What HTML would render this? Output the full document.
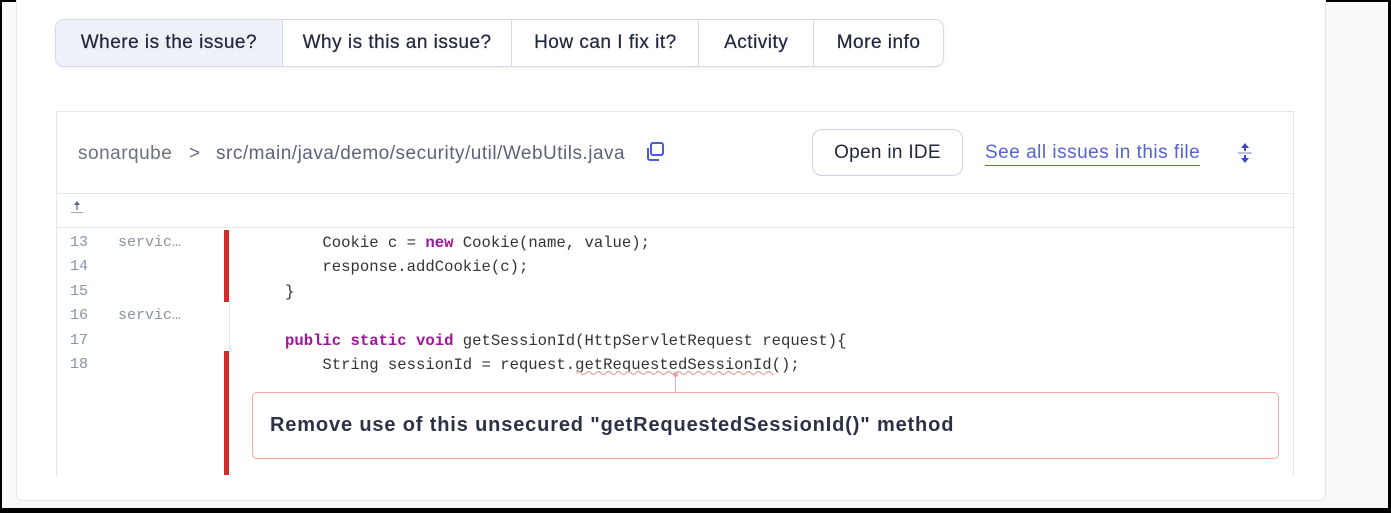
<!DOCTYPE html>
<html><head><meta charset="utf-8"><style>
*{margin:0;padding:0;box-sizing:border-box}
body{width:1391px;height:513px;background:#000;position:relative;overflow:hidden;font-family:"Liberation Sans",sans-serif}
.a{position:absolute}
#page{left:2px;top:2px;width:1386px;height:506px;background:#f9f9fb}
#panel{left:16px;top:0;width:1310px;height:501px;background:#fff;border-left:1px solid #e6e8ef;border-right:1px solid #e3e7f1;border-bottom:1px solid #e6e8ef;border-radius:0 0 6px 6px}
.tabs{left:55px;top:19px;width:889px;height:48px;border:1px solid #d3d9e6;border-radius:9px;overflow:hidden;display:flex;box-shadow:0 1px 3px rgba(0,0,0,.06)}
.tab{height:100%;display:flex;align-items:center;justify-content:center;font-size:19px;letter-spacing:.5px;color:#232840;border-right:1px solid #d3d9e6;-webkit-text-stroke:.25px #232840}
.tab:last-child{border-right:none}
.t{font-size:19px;letter-spacing:.5px}
.mono{font-family:"Liberation Mono",monospace;font-size:15.6px;color:#333;white-space:pre}
.ln{color:#8a93a3;font-size:15px}
.kw{color:#a0139b;font-weight:bold}
</style></head><body>
<div id="page" class="a"></div>
<div id="panel" class="a"></div>
<div class="a tabs">
<div class="tab" style="width:227px;background:#eef1f7">Where is the issue?</div>
<div class="tab" style="width:230px">Why is this an issue?</div>
<div class="tab" style="width:187px">How can I fix it?</div>
<div class="tab" style="width:115px">Activity</div>
<div class="tab" style="width:129px">More info</div>
</div>
<div class="a" style="left:56px;top:111px;width:1238px;height:365px;border:1px solid #e4e5e9;border-bottom:none"></div>
<div class="a" style="left:56px;top:193px;width:1238px;height:1px;background:#e4e5e9"></div>
<div class="a" style="left:56px;top:227px;width:1238px;height:1px;background:#e4e5e9"></div>
<div class="a t" style="left:78px;top:143px;color:#6b7180">sonarqube</div>
<div class="a t" style="left:189px;top:143px;color:#6b7180">&gt;</div>
<div class="a t" style="left:216px;top:143px;color:#5d6478">src/main/java/demo/security/util/WebUtils.java</div>
<svg class="a" style="left:644px;top:141px" width="22" height="22" viewBox="0 0 22 22" fill="none" stroke="#4b5bd0" stroke-width="2"><rect x="7" y="2" width="12" height="12" rx="2"/><path d="M4 7v10a2 2 0 0 0 2 2h9"/></svg>
<div class="a t" style="left:812px;top:129px;width:151px;height:47px;border:1px solid #cdd3e3;border-radius:10px;display:flex;align-items:center;justify-content:center;color:#22283c;letter-spacing:.3px">Open in IDE</div>
<div class="a t" style="left:985px;top:142px;color:#5563d2;border-bottom:1px solid #5563d2;padding-bottom:1px">See all issues in this file</div>
<svg class="a" style="left:1236px;top:141px" width="18" height="24" viewBox="0 0 18 24" fill="#3d4ab8"><path d="M9 2l4 5H5z"/><path d="M9 22l4-5H5z"/><rect x="8" y="7" width="2" height="3"/><rect x="8" y="14" width="2" height="3"/><rect x="2" y="11.5" width="14" height="1" opacity=".7"/></svg>
<svg class="a" style="left:70px;top:200px" width="14" height="16" viewBox="0 0 14 16" fill="#5b6580"><path d="M7 1l3 4H4z"/><rect x="6.4" y="4" width="1.2" height="6"/><rect x="1" y="12" width="12" height="1" opacity=".6"/></svg>
<div class="a" style="left:224px;top:230px;width:5px;height:72px;background:#d42a2a"></div>
<div class="a" style="left:229px;top:302px;width:1px;height:49px;background:#e4e5e9"></div>
<div class="a" style="left:224px;top:351px;width:5px;height:124px;background:#d42a2a"></div>
<div class="a mono ln" style="left:70px;top:231px;line-height:24.4px">13
14
15
16
17
18</div>
<div class="a mono ln" style="left:118px;top:231px;line-height:24.4px">servic…


servic…</div>
<div class="a mono" style="left:285px;top:231px;line-height:24.4px">    Cookie c = <span class="kw">new</span> Cookie(name, value);
    response.addCookie(c);
}

<span class="kw">public static void</span> getSessionId(HttpServletRequest request){
    String sessionId = request.getRequestedSessionId();</div>
<svg class="a" style="left:576px;top:369px" width="198" height="8" viewBox="0 0 198 8" fill="none" stroke="#e8a0a0" stroke-width="1.2"><path d="M0 4 q2.5 -3 5 0 t5 0 t5 0 t5 0 t5 0 t5 0 t5 0 t5 0 t5 0 t5 0 t5 0 t5 0 t5 0 t5 0 t5 0 t5 0 t5 0 t5 0 t5 0 t5 0 t5 0 t5 0 t5 0 t5 0 t5 0 t5 0 t5 0 t5 0 t5 0 t5 0 t5 0 t5 0 t5 0 t5 0 t5 0 t5 0 t5 0 t5 0 t5 0 t5 0"/></svg>
<div class="a" style="left:675px;top:373px;width:1px;height:19px;background:#f0b0ad"></div>
<div class="a" style="left:673px;top:372px;width:5px;height:5px;border-radius:50%;background:#e8a0a0"></div>
<div class="a" style="left:252px;top:392px;width:1027px;height:67px;border:1px solid #f5aaa6;border-radius:5px;display:flex;align-items:center;padding-left:17px;font-size:20px;letter-spacing:.85px;font-weight:bold;color:#2c3145">Remove use of this unsecured "getRequestedSessionId()" method</div>
</body></html>
